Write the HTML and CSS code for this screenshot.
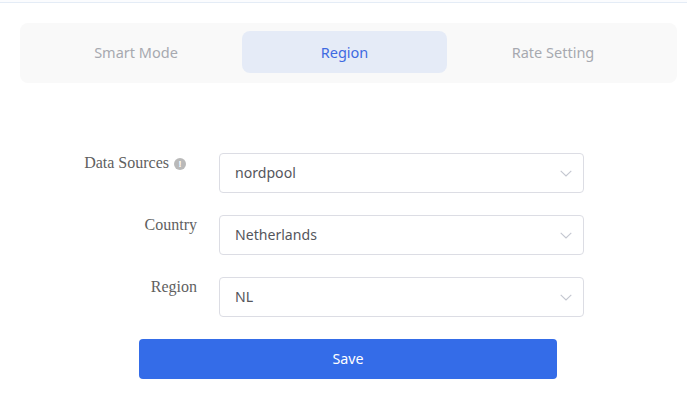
FILE: index.html
```html
<!DOCTYPE html>
<html lang="en">
<head>
<meta charset="utf-8">
<title>Region</title>
<link rel="stylesheet" href="styles.css">
</head>
<body>
<div class="topbar"></div>
<div class="page">
  <div class="tabs">
    <div class="tab">Smart Mode</div>
    <div class="tab tab-active">Region</div>
    <div class="tab">Rate Setting</div>
  </div>
  <form class="form">
    <div class="row">
      <div class="label"><div class="label-inner">Data Sources <span class="info">!</span></div></div>
      <div class="select"><span class="value">nordpool</span>
        <svg class="chev" width="12" height="7" viewBox="0 0 12 7"><path d="M.7.8 6 6 11.300.8" fill="none" stroke="#c4c7d0" stroke-width="1.100"/></svg>
      </div>
    </div>
    <div class="row">
      <div class="label">Country</div>
      <div class="select"><span class="value">Netherlands</span>
        <svg class="chev" width="12" height="7" viewBox="0 0 12 7"><path d="M.7.8 6 6 11.300.8" fill="none" stroke="#c4c7d0" stroke-width="1.100"/></svg>
      </div>
    </div>
    <div class="row">
      <div class="label">Region</div>
      <div class="select"><span class="value">NL</span>
        <svg class="chev" width="12" height="7" viewBox="0 0 12 7"><path d="M.7.8 6 6 11.300.8" fill="none" stroke="#c4c7d0" stroke-width="1.100"/></svg>
      </div>
    </div>
    <button class="save" type="button"><span class="save-text">Save</span></button>
  </form>
</div>
</body>
</html>
```
FILE: styles.css
```css
* { box-sizing: border-box; }
html, body { margin: 0; padding: 0; background: #fff; }
body { width: 687px; height: 410px; overflow: hidden; font-family: "Noto Sans", "Open Sans", sans-serif; }
.topbar { height: 3px; background: #fbfcfe; border-bottom: 1px solid #e4ecf6; }
.page { padding: 20px 10px 0 20px; }
.tabs {
  display: grid;
  grid-template-columns: repeat(3, 205px);
  gap: 3.500px;
  justify-content: start;
  height: 60px;
  padding: 8px 0 10px 13.500px;
  background: #f9f9f9;
  border-radius: 8px;
}
.tab {
  display: flex;
  align-items: center;
  justify-content: center;
  padding-bottom: 1px;
  font-size: 14.500px;
  color: #a7a9b0;
  border-radius: 8px;
}
.tab-active { background: #e5ebf7; color: #3e6ae1; }
.form { display: flex; flex-direction: column; margin-top: 70px; }
.row { display: flex; gap: 22px; margin-bottom: 22px; height: 40px; }
.label {
  width: 177px;
  text-align: right;
  font-family: "Liberation Serif", serif;
  font-size: 16px;
  line-height: 20px;
  color: #5f5f5f;
}
.label-inner { margin-right: 11px; white-space: nowrap; }
.info {
  display: inline-block;
  width: 12px;
  height: 12px;
  border-radius: 50%;
  background: #b9b9b9;
  color: #fff;
  font: 700 9px/12px "Liberation Sans", sans-serif;
  text-align: center;
  vertical-align: 1px;
  margin-left: 1px;
}
.select {
  width: 365px;
  height: 40px;
  display: flex;
  align-items: center;
  justify-content: space-between;
  padding: 0 11px 0 15px;
  border: 1px solid #dcdde4;
  border-radius: 4px;
  font-size: 14.100px;
  color: #55565c;
}
.value { margin-top: -2px; }
.save {
  align-self: flex-start;
  margin-left: 119px;
  width: 418px;
  height: 40px;
  border: 0;
  border-radius: 4px;
  background: #346ce8;
  color: #fff;
  font: 14.300px "Noto Sans", "Open Sans", sans-serif;
}
.save-text { position: relative; top: -1px; }
```
